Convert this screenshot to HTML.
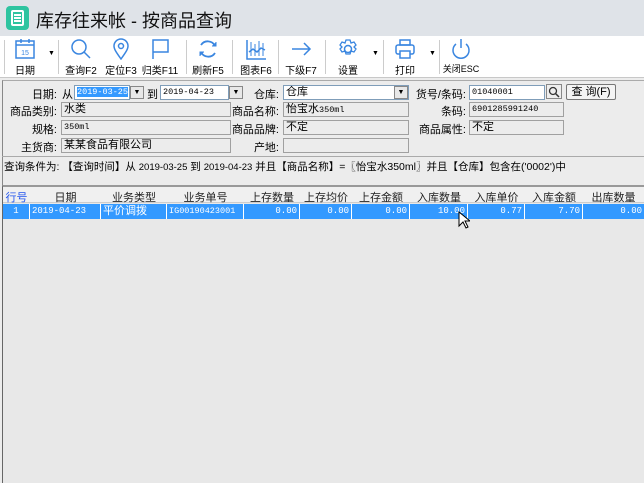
<!DOCTYPE html><html><head><meta charset="utf-8"><style>
*{margin:0;padding:0;box-sizing:border-box}
body{width:644px;height:483px;overflow:hidden;background:#ececec;font-family:"Liberation Sans","Noto Sans CJK SC",sans-serif;font-size:11px;color:#000;position:relative}
.a{position:absolute;white-space:nowrap}
.lbl{position:absolute;text-align:right;font-size:11px;white-space:nowrap}
.in{position:absolute;height:15px;border:1px solid #a0a0a0;background:#ececec;font-size:8.5px;padding-left:2px;line-height:13px;font-family:"Liberation Mono","Noto Sans CJK SC",monospace;white-space:nowrap;overflow:hidden}
.cj{font-family:"Liberation Sans","Noto Sans CJK SC",sans-serif;font-size:11px}
.wh{background:#fff;border-color:#7f9db9}
.dd{position:absolute;width:14px;height:13px;background:#e8e8e8;border:1px solid #888;font-size:7px;text-align:center;line-height:12px}
.tb{position:absolute;top:38px;width:44px;text-align:center;font-size:10px;white-space:nowrap}
.tb svg{display:block;margin:0 auto 2px}
.sep{position:absolute;top:40px;width:1px;height:34px;background:#ccc}
.arr{position:absolute;top:50px;font-size:7px}
.hd{position:absolute;top:189px;height:15px;text-align:center;font-size:11px;color:#222}
.c{position:absolute;top:204px;height:15px;line-height:15px;color:#fff;font-size:9px;font-family:"Liberation Mono","Noto Sans CJK SC",monospace;border-right:1px solid #fff;padding:0 2px;white-space:nowrap;overflow:hidden}
</style></head><body>
<div class="a" style="left:0;top:0;width:644px;height:36px;background:#dfe3e8"></div>
<div class="a" style="left:6px;top:6px;width:23px;height:24px;background:#2ec4a0;border-radius:4px"></div>
<div class="a" style="left:11px;top:10px;width:13px;height:16px;border:2px solid #fff;border-radius:2px"></div>
<div class="a" style="left:14px;top:14px;width:7px;height:1.5px;background:#fff;box-shadow:0 3px #fff,0 6px #fff"></div>
<div class="a" style="left:36px;top:7px;font-size:18px;color:#111">库存往来帐 - 按商品查询</div>
<div class="a" style="left:0;top:36px;width:644px;height:42px;background:#fff;border-bottom:1px solid #c8c8c8"></div>
<div class="sep" style="left:4px"></div>
<div class="tb" style="left:3px"><svg width="20" height="22" viewBox="0 0 20 22"><rect x="1" y="3" width="18" height="17" fill="none" stroke="#3a86e0" stroke-width="1.5"/><line x1="1" y1="7" x2="19" y2="7" stroke="#3a86e0" stroke-width="1.5"/><line x1="6" y1="1" x2="6" y2="5" stroke="#3a86e0" stroke-width="1.5"/><line x1="14" y1="1" x2="14" y2="5" stroke="#3a86e0" stroke-width="1.5"/><text x="10" y="17" font-size="7" text-anchor="middle" fill="#3a86e0" font-family="Liberation Sans">15</text></svg>日期</div>
<div class="arr" style="left:48px">▼</div>
<div class="sep" style="left:58px"></div>
<div class="tb" style="left:59px"><svg width="22" height="22"><circle cx="9" cy="9" r="7" fill="none" stroke="#3a86e0" stroke-width="1.5"/><line x1="14" y1="14" x2="20" y2="20" stroke="#3a86e0" stroke-width="1.5"/></svg>查询F2</div>
<div class="tb" style="left:99px"><svg width="20" height="22"><path d="M10 21C5 14 3 11 3 8a7 7 0 0 1 14 0c0 3-2 6-7 13z" fill="none" stroke="#3a86e0" stroke-width="1.5"/><circle cx="10" cy="8" r="2.5" fill="none" stroke="#3a86e0" stroke-width="1.5"/></svg>定位F3</div>
<div class="tb" style="left:138px"><svg width="20" height="22"><path d="M3 21V2h15v12H3" fill="none" stroke="#3a86e0" stroke-width="1.5"/></svg>归类F11</div>
<div class="sep" style="left:186px"></div>
<div class="tb" style="left:186px"><svg width="22" height="22"><path d="M18 8A8 8 0 0 0 4 7M4 14a8 8 0 0 0 14 1" fill="none" stroke="#3a86e0" stroke-width="1.8"/><path d="M15 8h4V4M7 14H3v4" fill="#3a86e0" stroke="#3a86e0"/></svg>刷新F5</div>
<div class="sep" style="left:232px"></div>
<div class="tb" style="left:234px"><svg width="22" height="22"><path d="M2 2v19h19" fill="none" stroke="#3a86e0" stroke-width="1.5"/><path d="M6 4v14M10 6v12M14 3v15M18 5v13" stroke="#3a86e0" stroke-width="1"/><path d="M4 14l4-3 4 3 4-4 4 2" fill="none" stroke="#3a86e0" stroke-width="1.5"/></svg>图表F6</div>
<div class="sep" style="left:278px"></div>
<div class="tb" style="left:279px"><svg width="22" height="22"><path d="M2 11h18M14 5l6 6-6 6" fill="none" stroke="#3a86e0" stroke-width="1.5"/></svg>下级F7</div>
<div class="sep" style="left:325px"></div>
<div class="tb" style="left:326px"><svg width="22" height="22"><circle cx="11" cy="11" r="3.5" fill="none" stroke="#3a86e0" stroke-width="1.5"/><path d="M9 2h4l1 3 3-1 2 3-2 2 2 2l-2 3-3-1-1 3H9l-1-3-3 1-2-3 2-2-2-2 2-3 3 1z" fill="none" stroke="#3a86e0" stroke-width="1.3"/></svg>设置</div>
<div class="arr" style="left:372px">▼</div>
<div class="sep" style="left:383px"></div>
<div class="tb" style="left:383px"><svg width="22" height="22"><rect x="6" y="2" width="10" height="5" fill="none" stroke="#3a86e0" stroke-width="1.5"/><rect x="2" y="7" width="18" height="9" rx="2" fill="none" stroke="#3a86e0" stroke-width="1.5"/><rect x="6" y="13" width="10" height="7" fill="#fff" stroke="#3a86e0" stroke-width="1.5"/></svg>打印</div>
<div class="arr" style="left:429px">▼</div>
<div class="sep" style="left:439px"></div>
<div class="tb" style="left:439px;font-size:9px"><svg width="22" height="22"><path d="M6 6a8 8 0 1 0 10 0" fill="none" stroke="#3a86e0" stroke-width="1.5"/><line x1="11" y1="1" x2="11" y2="10" stroke="#3a86e0" stroke-width="1.5"/></svg>关闭ESC</div>

<div class="a" style="left:2px;top:80px;width:642px;height:105px;border-left:1px solid #888;border-top:1px solid #aaa"></div>
<div class="lbl" style="left:0;top:86px;width:57px">日期:</div>
<div class="a" style="left:62px;top:86px">从</div>
<div class="in wh" style="left:74px;top:85px;width:56px"><span style="background:#3399ff;color:#fff">2019-03-25</span></div>
<div class="dd" style="left:130px;top:86px">▼</div>
<div class="a" style="left:147px;top:86px">到</div>
<div class="in wh" style="left:160px;top:85px;width:69px">2019-04-23</div>
<div class="dd" style="left:229px;top:86px">▼</div>
<div class="lbl" style="left:220px;top:86px;width:59px">仓库:</div>
<div class="in wh cj" style="left:283px;top:85px;width:126px">仓库</div>
<div class="dd" style="left:394px;top:86px">▼</div>
<div class="lbl" style="left:400px;top:86px;width:66px">货号/条码:</div>
<div class="in wh" style="left:469px;top:85px;width:76px">01040001</div>
<div class="a" style="left:546px;top:84px;width:16px;height:15px;border:1px solid #888;background:#eee"><svg width="14" height="13"><circle cx="6" cy="6" r="3.5" fill="none" stroke="#333" stroke-width="1.3"/><line x1="8.5" y1="8.5" x2="12" y2="12" stroke="#333" stroke-width="1.5"/></svg></div>
<div class="a" style="left:566px;top:84px;width:50px;height:16px;border:1px solid #777;border-radius:2px;background:#f4f4f4;text-align:center;line-height:14px">查 询(F)</div>

<div class="lbl" style="left:0;top:103px;width:57px">商品类别:</div>
<div class="in cj" style="left:61px;top:102px;width:170px">水类</div>
<div class="lbl" style="left:220px;top:103px;width:59px">商品名称:</div>
<div class="in" style="left:283px;top:102px;width:126px"><span class="cj">怡宝水</span>350ml</div>
<div class="lbl" style="left:400px;top:103px;width:66px">条码:</div>
<div class="in" style="left:469px;top:102px;width:95px">6901285991240</div>

<div class="lbl" style="left:0;top:121px;width:57px">规格:</div>
<div class="in" style="left:61px;top:120px;width:170px">350ml</div>
<div class="lbl" style="left:220px;top:121px;width:59px">商品品牌:</div>
<div class="in cj" style="left:283px;top:120px;width:126px">不定</div>
<div class="lbl" style="left:400px;top:121px;width:66px">商品属性:</div>
<div class="in cj" style="left:469px;top:120px;width:95px">不定</div>

<div class="lbl" style="left:0;top:139px;width:57px">主货商:</div>
<div class="in cj" style="left:61px;top:138px;width:170px">某某食品有限公司</div>
<div class="lbl" style="left:220px;top:139px;width:59px">产地:</div>
<div class="in" style="left:283px;top:138px;width:126px"></div>

<div class="a" style="left:2px;top:156px;width:642px;height:1px;background:#aaa"></div>
<div class="a" style="left:4px;top:159px;font-size:10.5px">查询条件为: 【查询时间】从 <span style="font-size:9.5px">2019-03-25</span> 到 <span style="font-size:9.5px">2019-04-23</span> 并且【商品名称】=〖怡宝水350ml〗并且【仓库】包含在('0002')中</div>

<div class="a" style="left:2px;top:185px;width:642px;height:298px;background:#e8e8e8;border-left:1px solid #666;border-top:2px solid #999"></div>
<div class="a" style="left:3px;top:187px;width:641px;height:16px;background:#f0f0f0;border-bottom:1px solid #ccc"></div>
<div class="hd" style="left:3px;width:27px;color:#2255ee">行号</div>
<div class="hd" style="left:30px;width:71px">日期</div>
<div class="hd" style="left:101px;width:66px">业务类型</div>
<div class="hd" style="left:167px;width:77px">业务单号</div>
<div class="hd" style="left:244px;width:56px">上存数量</div>
<div class="hd" style="left:300px;width:52px">上存均价</div>
<div class="hd" style="left:352px;width:58px">上存金额</div>
<div class="hd" style="left:410px;width:58px">入库数量</div>
<div class="hd" style="left:468px;width:57px">入库单价</div>
<div class="hd" style="left:525px;width:58px">入库金额</div>
<div class="hd" style="left:583px;width:61px">出库数量</div>
<div class="a" style="left:3px;top:204px;width:641px;height:15px;background:#3399ff"></div>
<div class="c" style="left:3px;width:27px;text-align:center">1</div>
<div class="c" style="left:30px;width:71px">2019-04-23</div>
<div class="c" style="left:101px;width:66px;font-family:'Liberation Sans','Noto Sans CJK SC',sans-serif;font-size:11px">平价调拨</div>
<div class="c" style="left:167px;width:77px;font-size:8.5px">IG00190423001</div>
<div class="c" style="left:244px;width:56px;text-align:right">0.00</div>
<div class="c" style="left:300px;width:52px;text-align:right">0.00</div>
<div class="c" style="left:352px;width:58px;text-align:right">0.00</div>
<div class="c" style="left:410px;width:58px;text-align:right">10.00</div>
<div class="c" style="left:468px;width:57px;text-align:right">0.77</div>
<div class="c" style="left:525px;width:58px;text-align:right">7.70</div>
<div class="c" style="left:583px;width:61px;text-align:right;border-right:0">0.00</div>
<svg class="a" style="left:458px;top:211px" width="12" height="18"><path d="M1 1v14l4-4 3 6 2-1-3-6h5z" fill="#fff" stroke="#000"/></svg>
</body></html>
